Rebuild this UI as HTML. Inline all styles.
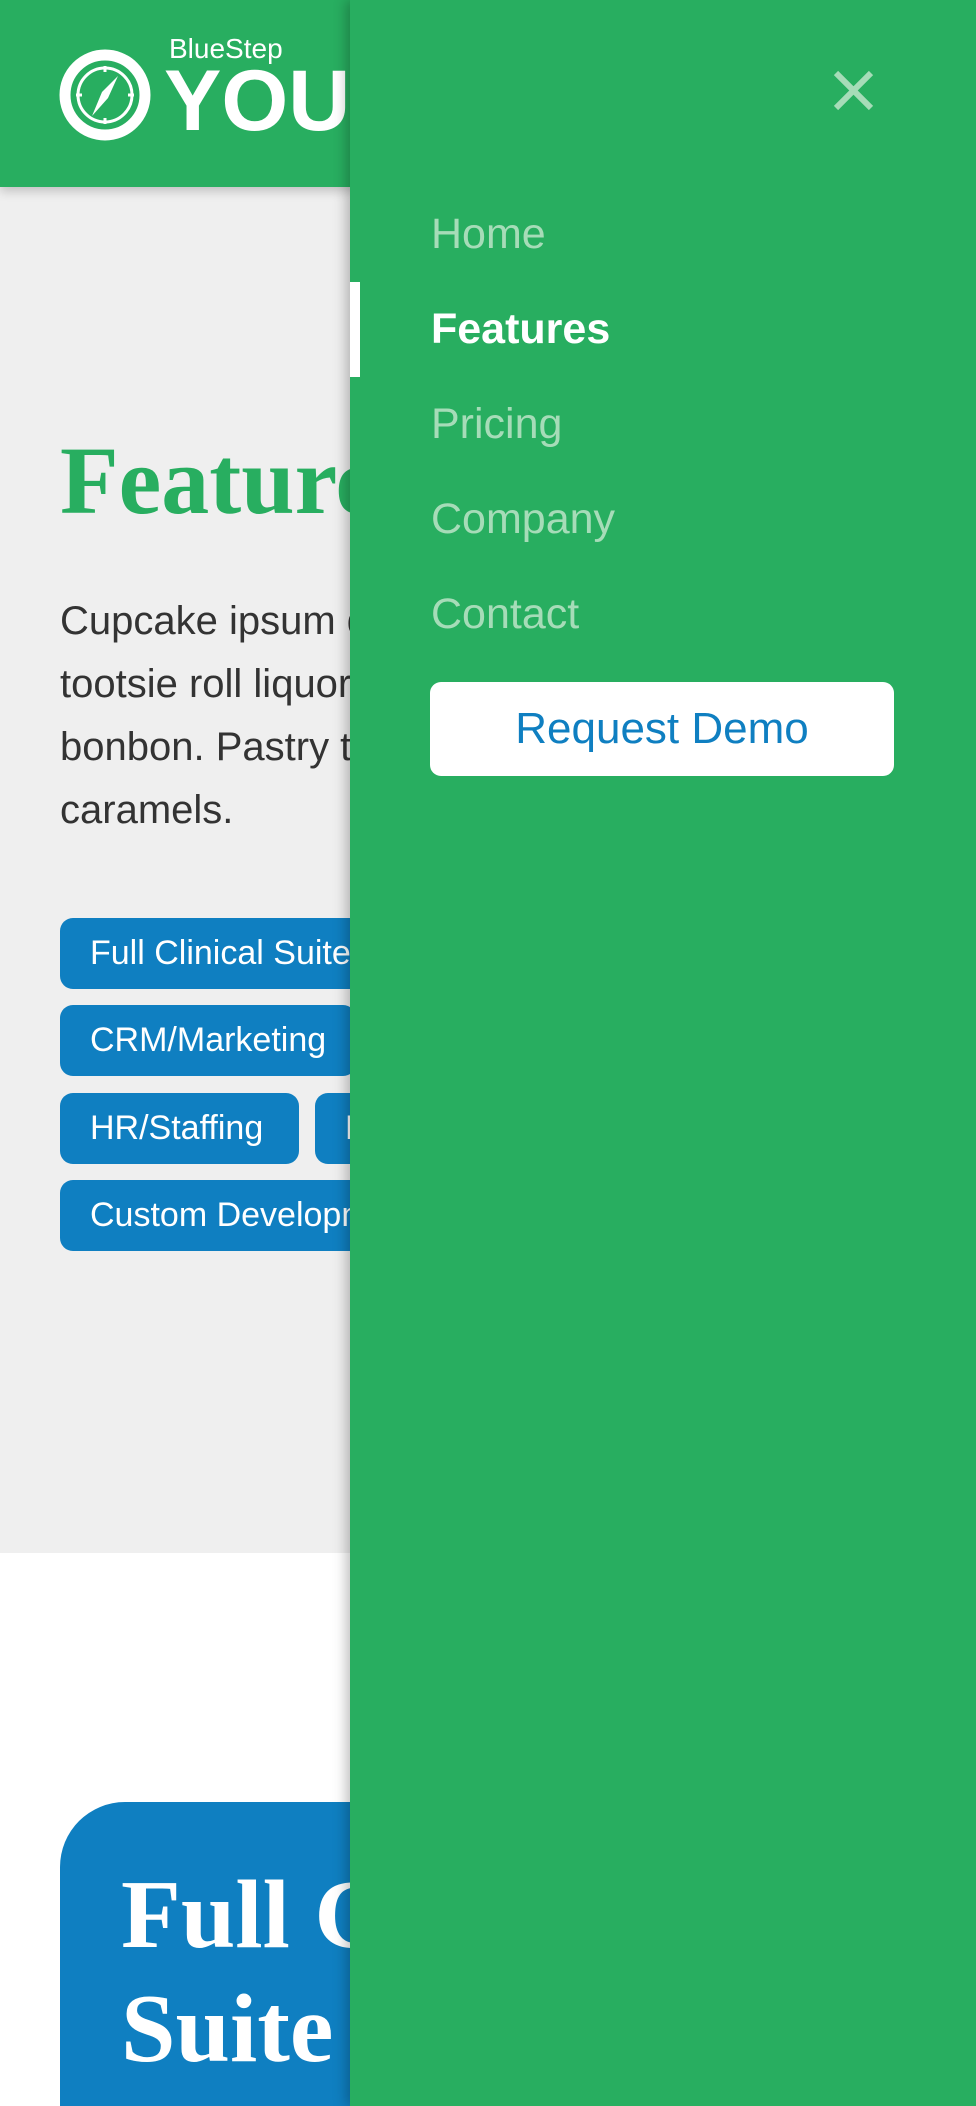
<!DOCTYPE html>
<html style="overflow:hidden;height:2106px"><head><meta charset="utf-8"><style>
*{margin:0;padding:0;box-sizing:border-box}
body{width:976px;height:2106px;overflow:hidden;position:relative;background:#fff;font-family:"Liberation Sans",sans-serif}
.header{position:absolute;left:0;top:0;width:976px;height:187px;background:#28ae60;box-shadow:0 4px 10px rgba(0,0,0,.2);z-index:2}
.gray{position:absolute;left:0;top:187px;width:976px;height:1366px;background:#efefef}
.h1{position:absolute;left:60px;top:425px;font-family:"Liberation Serif",serif;font-weight:bold;font-size:96px;color:#28ae60}
.p{position:absolute;left:60px;top:590px;width:900px;font-size:40px;line-height:63px;color:#333;white-space:nowrap}
.tag{position:absolute;left:60px;height:71px;background:#0f7fc1;color:#fff;border-radius:13px;font-size:34px;line-height:71px;padding:0 30px;white-space:nowrap}
.card{position:absolute;left:60px;top:1802px;width:900px;height:304px;background:#0f7fc1;border-radius:65px 0 0 0;overflow:hidden}
.card div{position:absolute;left:61px;top:56px;font-family:"Liberation Serif",serif;font-weight:bold;font-size:98px;line-height:114px;color:#fff}
.panel{position:absolute;left:350px;top:0;width:626px;height:2106px;background:#28ae60;box-shadow:-4px 0 12px rgba(0,0,0,.25);z-index:5}
.nav{position:absolute;left:81px;font-size:43px;color:#a6dcb8}
.bar{position:absolute;left:0;top:282px;width:10px;height:95px;background:#fff}
.btn{position:absolute;left:80px;top:682px;width:464px;height:94px;background:#fff;border-radius:11px;color:#0f7fc1;font-size:44px;line-height:94px;text-align:center}
</style></head><body>
<div class="header">
<svg style="position:absolute;left:58px;top:48px" width="94" height="94" viewBox="0 0 94 94">
<circle cx="47" cy="47" r="40" fill="none" stroke="#fff" stroke-width="11"/>
<circle cx="47" cy="47" r="27" fill="none" stroke="#fff" stroke-width="3"/>
<path d="M60 28 L50 50 L34 68 L44 44 Z" fill="#fff"/>
<rect x="45.5" y="18" width="3" height="6" fill="#fff"/><rect x="45.5" y="70" width="3" height="6" fill="#fff"/>
<rect x="18" y="45.5" width="6" height="3" fill="#fff"/><rect x="70" y="45.5" width="6" height="3" fill="#fff"/>
</svg>
<div style="position:absolute;left:169px;top:33px;font-size:28px;color:#fff">BlueStep</div>
<div style="position:absolute;left:164px;top:58px;font-size:86px;font-weight:bold;color:#fff;line-height:86px">YOU</div>
</div>
<div class="gray"></div>
<div class="h1">Features</div>
<div class="p">Cupcake ipsum dolor sit amet<br>tootsie roll liquorice halvah<br>bonbon. Pastry tart candy<br>caramels.</div>
<div class="tag" style="top:918px">Full Clinical Suite</div>
<div class="tag" style="top:1005px">CRM/Marketing</div>
<div class="tag" style="top:1093px;width:239px">HR/Staffing</div>
<div class="tag" style="top:1093px;left:315px">Billing</div>
<div class="tag" style="top:1180px">Custom Development</div>
<div class="card"><div>Full Clinical<br>Suite</div></div>
<div class="panel">
<svg style="position:absolute;left:482px;top:70px" width="43" height="41" viewBox="0 0 43 41"><path d="M4 3 L39 38 M39 3 L4 38" stroke="#a6dcb8" stroke-width="6"/></svg>
<div class="bar"></div>
<div class="nav" style="top:210px">Home</div>
<div class="nav" style="top:305px;color:#fff;font-weight:bold">Features</div>
<div class="nav" style="top:400px">Pricing</div>
<div class="nav" style="top:495px">Company</div>
<div class="nav" style="top:590px">Contact</div>
<div class="btn">Request Demo</div>
</div>
</body></html>
